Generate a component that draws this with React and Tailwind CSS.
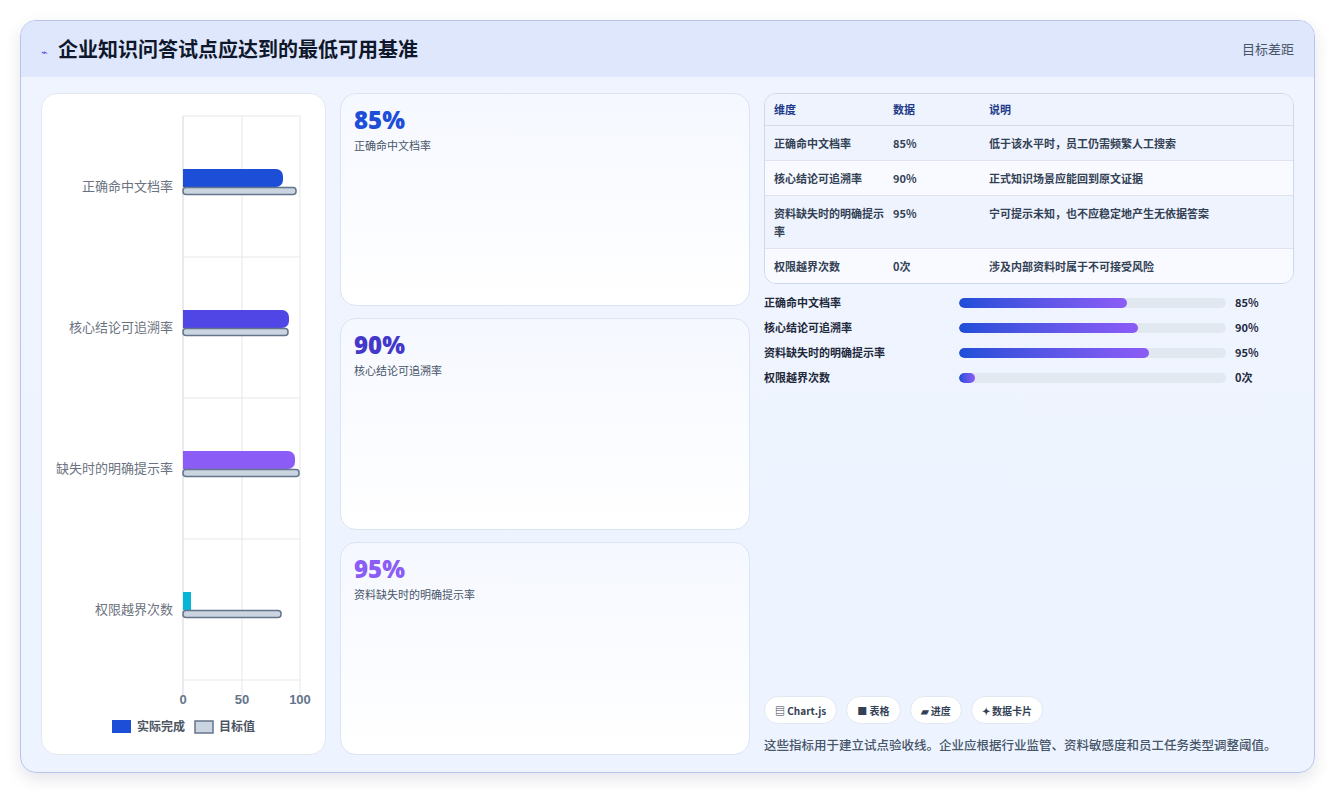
import React from "react";

const rows = [
  { l: "正确命中文档率", a: 100, t: 113, c: "#1d4ed8" },
  { l: "核心结论可追溯率", a: 106, t: 105, c: "#4f46e5" },
  { l: "缺失时的明确提示率", a: 112, t: 116, c: "#8b5cf6" },
  { l: "权限越界次数", a: 7, t: 98, c: "#06b6d4" },
];

function Chart() {
  const x0 = 141, top = 22, rowH = 141;
  return (
    <svg width="284" height="660" className="block">
      {[0, 1, 2, 3].map((i) => (
        <line key={i} x1={x0} x2={258} y1={top + i * rowH + 141} y2={top + i * rowH + 141} stroke="#e5e7eb" />
      ))}
      <line x1={x0} x2={258} y1={top} y2={top} stroke="#e5e7eb" />
      {[x0, x0 + 59, 258].map((x, i) => (
        <line key={i} x1={x} x2={x} y1={top} y2={top + 4 * rowH + 16} stroke={i === 0 ? "#d1d5db" : "#e5e7eb"} />
      ))}
      {rows.map((r, i) => {
        const cy = top + i * rowH + 70;
        return (
          <g key={i}>
            <text x={x0 - 10} y={cy + 5} textAnchor="end" fontSize="13" fill="#6b7280" fontFamily="'Noto Sans CJK SC', sans-serif">{r.l}</text>
            <rect x={x0} y={cy - 17} width={r.a} height={18} rx={7} fill={r.c} />
            <rect x={x0} y={cy - 17} width={8} height={18} fill={r.c} />
            <rect x={x0} y={cy + 1.5} width={r.t} height={7} rx={3} fill="#cbd5e1" stroke="#64748b" strokeWidth="1.5" />
          </g>
        );
      })}
      {[["0", x0], ["50", x0 + 59], ["100", 258]].map(([t, x]) => (
        <text key={t} x={x} y={610} textAnchor="middle" fontSize="13" fontWeight="600" fill="#64748b" fontFamily="'Liberation Sans', sans-serif">{t}</text>
      ))}
      <rect x={70} y={626} width={19} height={13} fill="#1d4ed8" />
      <text x={95} y={637} fontSize="12" fill="#4b5563" fontWeight="600" fontFamily="'Noto Sans CJK SC', sans-serif">实际完成</text>
      <rect x={153} y={627} width={18} height={12} fill="#cbd5e1" stroke="#64748b" strokeWidth="1.5" />
      <text x={177} y={637} fontSize="12" fill="#4b5563" fontWeight="600" fontFamily="'Noto Sans CJK SC', sans-serif">目标值</text>
    </svg>
  );
}

const cards = [
  { v: "85%", l: "正确命中文档率", c: "text-[#1d4ed8]" },
  { v: "90%", l: "核心结论可追溯率", c: "text-[#4338ca]" },
  { v: "95%", l: "资料缺失时的明确提示率", c: "text-[#8b5cf6]" },
];

const table = [
  ["正确命中文档率", "85%", "低于该水平时，员工仍需频繁人工搜索"],
  ["核心结论可追溯率", "90%", "正式知识场景应能回到原文证据"],
  ["资料缺失时的明确提示率", "95%", "宁可提示未知，也不应稳定地产生无依据答案"],
  ["权限越界次数", "0次", "涉及内部资料时属于不可接受风险"],
];

const bars = [
  ["正确命中文档率", 63, "85%"],
  ["核心结论可追溯率", 67, "90%"],
  ["资料缺失时的明确提示率", 71, "95%"],
  ["权限越界次数", 6, "0次"],
];

export default function App() {
  return (
    <div className="w-[1336px] h-[790px] bg-white p-5" style={{ fontFamily: "'Noto Sans CJK SC', 'Noto Sans', sans-serif" }}>
      <div className="w-[1295px] h-[753px] rounded-2xl border border-[#b8c4ec] overflow-hidden flex flex-col bg-gradient-to-b from-[#f0f4fe] to-[#edf4ff] shadow-[0_6px_16px_rgba(30,41,80,0.12)]">
        <div className="h-[56px] shrink-0 flex items-center justify-between px-5 bg-[#dfe7fd]">
          <div className="flex items-center gap-[10px]">
            <span className="text-[11px] text-[#4f46e5] pt-1">⌁</span>
            <span className="text-[20px] font-bold text-[#0f172a]">企业知识问答试点应达到的最低可用基准</span>
          </div>
          <span className="text-[13px] text-[#475569]">目标差距</span>
        </div>
        <div className="flex-1 flex gap-[14px] px-5 pt-[16px] pb-[19px]">
          <div className="w-[285px] shrink-0 bg-white rounded-2xl border border-[#e2e8f0]">
            <Chart />
          </div>
          <div className="w-[410px] shrink-0 flex flex-col gap-3">
            {cards.map((c) => (
              <div key={c.v} className="flex-1 rounded-2xl border border-[#dbe3f5] bg-gradient-to-b from-[#f5f8ff] to-white px-[13px] pt-[10px]">
                <div className={`text-[24px] font-extrabold leading-[32px] ${c.c}`} style={{ fontFamily: "'Open Sans', sans-serif" }}>{c.v}</div>
                <div className="text-[11px] text-[#475569] mt-[1px]">{c.l}</div>
              </div>
            ))}
          </div>
          <div className="flex-1 flex flex-col">
            <div className="rounded-xl border border-[#cfd8ea] overflow-hidden text-[11px] font-semibold text-[#334155]">
              <div className="flex h-[32px] items-center bg-[#eef3fd] border-b border-[#d5dcea] text-[#1e3a8a]">
                <div className="w-[128px] pl-[9px]">维度</div>
                <div className="w-[96px]">数据</div>
                <div>说明</div>
              </div>
              {table.map((r, i) => (
                <div key={i} className={`flex py-[8px] ${i % 2 ? "bg-[#f8faff]" : "bg-[#eef3fd]"} ${i < 3 ? "border-b border-[#dde3ef]" : ""}`}>
                  <div className="w-[128px] pl-[9px] pr-2 leading-[18px]">{r[0]}</div>
                  <div className="w-[96px] leading-[18px]">{r[1]}</div>
                  <div className="leading-[18px]">{r[2]}</div>
                </div>
              ))}
            </div>
            <div className="mt-[11px] flex flex-col gap-[10px]">
              {bars.map((b) => (
                <div key={b[0]} className="flex items-center h-[15px] text-[11px] font-semibold text-[#1e293b]">
                  <div className="w-[195px]">{b[0]}</div>
                  <div className="w-[267px] h-[10px] rounded-full bg-[#e2e8f0] overflow-hidden">
                    <div className="h-full rounded-full bg-gradient-to-r from-[#1d4ed8] to-[#8b5cf6]" style={{ width: `${b[1]}%` }} />
                  </div>
                  <div className="ml-[9px]">{b[2]}</div>
                </div>
              ))}
            </div>
            <div className="mt-auto flex gap-[9px] text-[10px] font-semibold text-[#334155]">
              {["▤ Chart.js", "■ 表格", "▰ 进度", "✦ 数据卡片"].map((t) => (
                <span key={t} className="h-[28px] px-[10px] flex items-center rounded-full bg-white border border-[#e2e8f0]">{t}</span>
              ))}
            </div>
            <div className="mt-[12px] text-[12.5px] text-[#475569] font-medium whitespace-nowrap">这些指标用于建立试点验收线。企业应根据行业监管、资料敏感度和员工任务类型调整阈值。</div>
          </div>
        </div>
      </div>
    </div>
  );
}
